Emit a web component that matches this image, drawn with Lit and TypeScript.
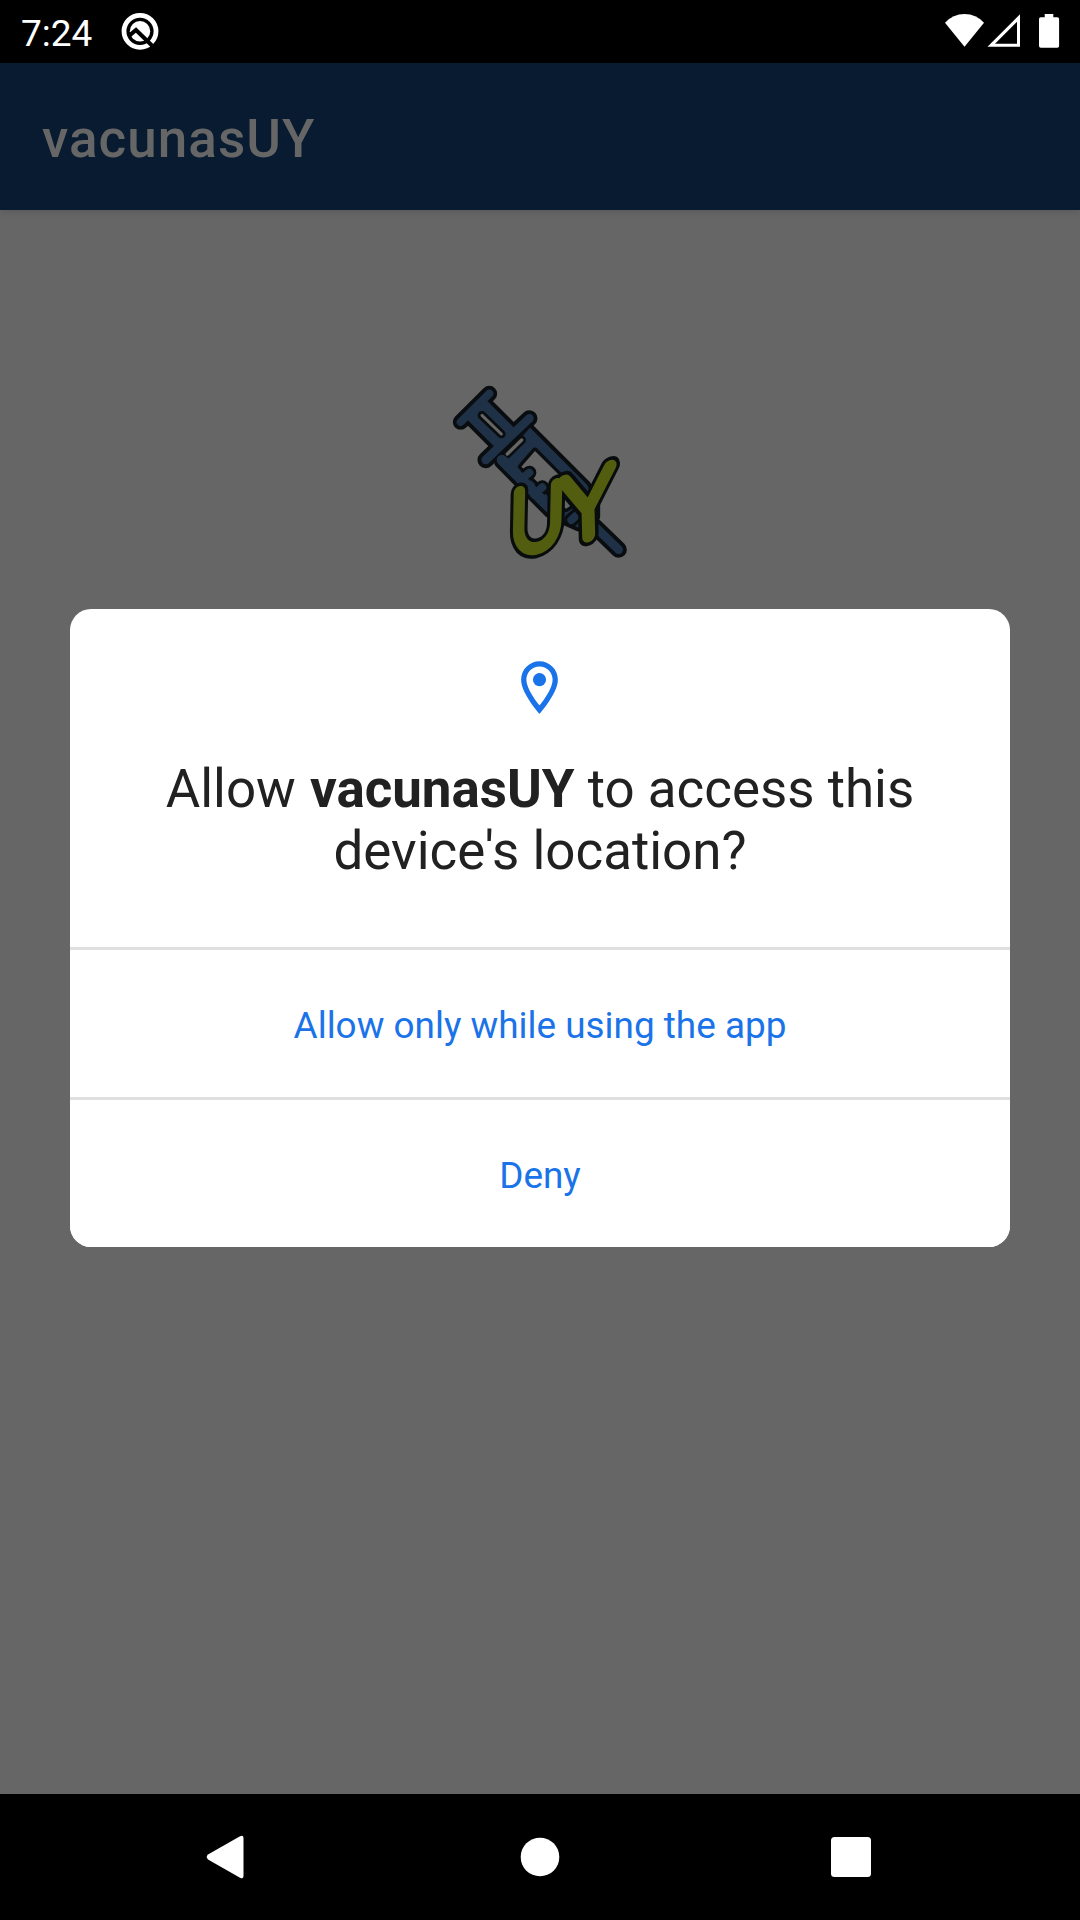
import { LitElement, html, css, svg } from "lit";
import { customElement } from "lit/decorators.js";

@customElement("status-bar")
class StatusBar extends LitElement {
  static styles = css`
    :host { display: flex; height: 63px; background: #000; color: #fff; justify-content: space-between; }
    .left { display: flex; padding-left: 21px; }
    .time { font: 400 37px/43px Roboto, sans-serif; padding-top: 12px; width: 72px; white-space: nowrap; }
    .debug { margin: 11px 0 0 27px; }
    .icons { display: block; }
  `;
  render() {
    return html`
      <div class="left">
        <div class="time">7:24</div>
        <svg class="debug" width="40" height="40" viewBox="0 0 40 40">
          <circle cx="20" cy="20.3" r="16" fill="none" stroke="#fff" stroke-width="4.8" />
          <circle cx="20" cy="20.3" r="10.2" fill="#fff" />
          <path d="M9.6 24.4 16 19 34 36.5" fill="none" stroke="#000" stroke-width="4" />
        </svg>
      </div>
      <svg class="icons" width="180" height="63" viewBox="0 0 180 63">
        <path d="M64.5 46.7 45 22.7Q53 14 64.5 14T84 22.7Z" fill="#fff" />
        <path fill-rule="evenodd" d="M87.5 46.8H120V14.3ZM95 43.7H117V21.8Z" fill="#fff" />
        <path d="M144.7 14h8.6v3.2h4q1.8 0 1.8 1.8v27q0 1.8-1.8 1.8h-16.5q-1.8 0-1.8-1.8V19q0-1.8 1.8-1.8h3.9Z" fill="#fff" />
      </svg>
    `;
  }
}

@customElement("app-logo")
class AppLogo extends LitElement {
  static styles = css`
    :host { display: block; width: 200px; height: 200px; }
    .art { display: block; overflow: visible; filter: blur(0.6px); }
    .line { fill: none; stroke-linecap: round; stroke-linejoin: round; }
    .shaft { stroke-linecap: butt; }
    .letter { font-family: Lato, sans-serif; font-weight: 100; text-anchor: middle; stroke-linejoin: round; stroke-linecap: round; }
    .edge { stroke: #090c0d; fill: #090c0d; stroke-width: 57px; }
    .face { stroke: #525d0f; fill: #525d0f; stroke-width: 36px; }
  `;
  private line(d: string, color: string, width: number) {
    return svg`<path class="line" d=${d} stroke=${color} stroke-width=${width} />`;
  }
  private body(color: string, grow: number) {
    return svg`
      ${this.line("M62 156 148 71", color, 26 + grow)}
      <path class="line shaft" d="M106 115 196 205" stroke=${color} stroke-width=${84 + grow} />
      ${this.line("M137 270 268 145", color, 28 + grow)}
      <path d="M176 280 325 430 385 458 415 472 468 440 468 400 440 344 270 174Z" fill=${color}
        stroke=${color} stroke-width=${4 + grow} stroke-linejoin="round" />
      ${this.line("M440 446 536 539", color, 28 + grow)}`;
  }
  private letters(kind: string) {
    return svg`
      <text class="letter ${kind}" font-size="256" transform="matrix(.88 -.19 -.02 1 290 534)">U</text>
      <text class="letter ${kind}" font-size="268" transform="matrix(.99 -.32 .026 1 446 498)">Y</text>`;
  }
  render() {
    const ink = "#0a0d10";
    const blue = "#1e3146";
    const ground = "#666";
    return html`<svg class="art" width="200" height="200" viewBox="0 0 600 600">
      ${this.body(ink, 21)} ${this.body(blue, -2)}
      ${this.line("M126 136 184 192", ink, 26)} ${this.line("M126 136 184 192", ground, 9)}
      ${this.line("M202 252 245 210", ink, 26)} ${this.line("M202 252 245 210", ground, 10)}
      <path d="M285 243 400 358V402L378 416 244 290Z" fill=${ground} stroke=${ink} stroke-width="20" stroke-linejoin="round" paint-order="stroke" />
      ${this.line("M240 330 268 308M282 374 307 352M394 450 412 434", ink, 42)}
      ${this.line("M240 330 268 308M282 374 307 352M394 450 412 434", blue, 24)}
      ${this.line("M186 270 350 434", blue, 32)}
      ${this.letters("edge")} ${this.letters("face")}
    </svg>`;
  }
}

@customElement("permission-dialog")
class PermissionDialog extends LitElement {
  static styles = css`
    :host { display: block; width: 940px; background: #fff; border-radius: 21px; overflow: hidden; font-family: Roboto, sans-serif; }
    .head { display: flex; flex-direction: column; align-items: center; padding: 47px 84px 65px; }
    .pin { display: block; margin-right: 2px; }
    .question { margin: 39px 0 0; font-size: 52.9px; line-height: 62px; font-weight: 400; color: #212121; text-align: center; white-space: nowrap; }
    .name { font-weight: 700; margin-left: 1px; }
    .action { display: block; width: 100%; height: 150px; box-sizing: border-box; border: 0; border-top: 3px solid #dfdfdf; background: #fff; padding: 4px 0 0; font: 400 36.9px/43px Roboto, sans-serif; color: #1a73e8; text-align: center; }
  `;
  render() {
    return html`
      <div class="head">
        <svg class="pin" width="63" height="63" viewBox="0 0 24 24" fill="#1a73e8">
          <path d="M12 2C8.13 2 5 5.13 5 9c0 5.25 7 13 7 13s7-7.75 7-13c0-3.87-3.13-7-7-7zM7 9c0-2.76 2.24-5 5-5s5 2.24 5 5c0 2.88-2.88 7.19-5 9.88C9.92 16.21 7 11.85 7 9z" />
          <circle cx="12" cy="9" r="2.5" />
        </svg>
        <h1 class="question">Allow <span class="name">vacunasUY</span> to access this<br />device's location?</h1>
      </div>
      <button class="action">Allow only while using the app</button>
      <button class="action">Deny</button>
    `;
  }
}

@customElement("app-root")
class AppRoot extends LitElement {
  static styles = css`
    :host { display: block; }
    .screen { position: relative; display: flex; flex-direction: column; height: 1920px; width: 1080px; background: #666; overflow: hidden; }
    .toolbar { display: flex; align-items: center; height: 147px; padding: 5px 0 0 42px; box-sizing: border-box; background: #081b30; color: #666; font: 500 53px/62px Roboto, sans-serif; letter-spacing: 1.05px; box-shadow: 0 2px 6px rgba(0, 0, 0, 0.12); }
    .body { flex: 1; display: flex; flex-direction: column; align-items: center; padding-top: 160px; }
    .nav { display: block; background: #000; }
    .dialog { position: absolute; left: 70px; top: 609px; }
  `;
  render() {
    return html`
      <div class="screen">
        <status-bar></status-bar>
        <header class="toolbar">vacunasUY</header>
        <main class="body"><app-logo></app-logo></main>
        <svg class="nav" width="1080" height="126" viewBox="0 0 1080 126" fill="#fff">
          <path d="M208 60.6 240 42.3Q243.5 40.6 243.5 44V82Q243.5 85.4 240 83.7L208 65.4Q205.4 63 208 60.6Z" />
          <circle cx="540" cy="63" r="19.3" />
          <rect x="831" y="43" width="40" height="40" rx="3.5" />
        </svg>
        <permission-dialog class="dialog"></permission-dialog>
      </div>
    `;
  }
}
